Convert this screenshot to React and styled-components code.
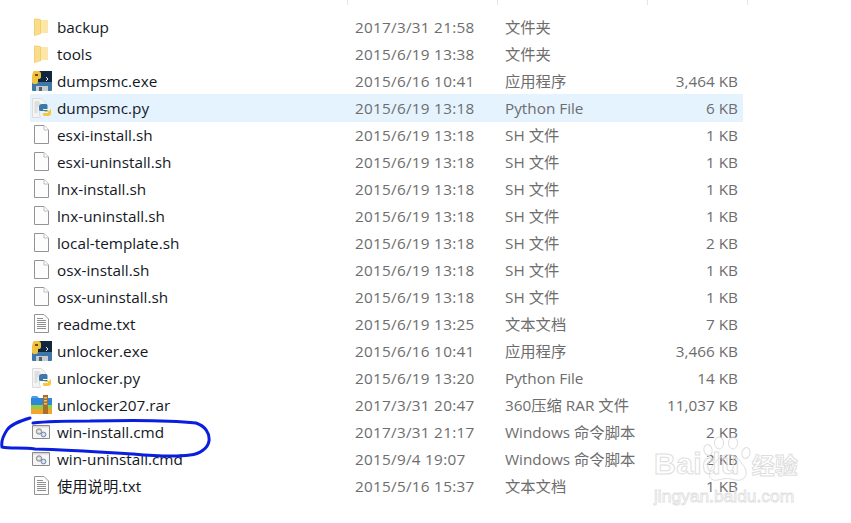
import React from 'react';
import styled, { createGlobalStyle } from 'styled-components';

const Global = createGlobalStyle`
  html, body { margin: 0; padding: 0; background: #fff; }
  body { width: 851px; height: 523px; overflow: hidden; }
`;

const Page = styled.div`
  position: relative;
  width: 851px;
  height: 523px;
  padding-top: 13px;
  box-sizing: border-box;
  font-family: "Open Sans", "Noto Sans CJK SC", sans-serif;
  font-size: 15.3px;
  line-height: 20px;
  overflow: hidden;
`;

const Dividers = styled.div`
  position: absolute;
  top: 0;
  left: 347px;
  width: 401px;
  height: 5px;
  display: grid;
  grid-template-columns: 150px 150px 100px 1px;
`;
const Divider = styled.span`
  width: 1px;
  background: #e5e5e5;
`;

const List = styled.div`
  display: flex;
  flex-direction: column;
  margin-left: 30px;
  width: 713px;
`;

const Row = styled.div`
  display: grid;
  grid-template-columns: 27px 298px 150px 150px 88px;
  align-items: center;
  height: 27px;
  background: ${p => (p.$selected ? '#e5f3ff' : 'transparent')};
  box-shadow: ${p => (p.$selected ? '0 1px 0 #e5f3ff' : 'none')};
`;
const IconCell = styled.div`
  display: flex;
  justify-content: center;
  align-items: center;
  padding-right: 5px;
`;
const Name = styled.div`
  color: #14181f;
  white-space: nowrap;
`;
const Meta = styled.div`
  color: #6d6d6d;
  white-space: nowrap;
`;
const DateText = styled(Meta)`
  letter-spacing: .27px;
`;
const Size = styled(Meta)`
  text-align: right;
  padding-right: 5px;
`;

const Overlay = styled.svg`
  position: absolute;
  left: 0;
  top: 0;
  pointer-events: none;
`;

const Watermark = styled.div`
  position: absolute;
  left: 654px;
  top: 447px;
  width: 160px;
  font-family: "Liberation Sans", "Noto Sans CJK SC", sans-serif;
  pointer-events: none;
`;
const Brand = styled.div`
  display: flex;
  align-items: baseline;
  font-size: 30px;
  font-weight: 700;
  line-height: 34px;
  letter-spacing: .5px;
  color: transparent;
  -webkit-text-stroke: 1px #dedede;
`;
const BrandCn = styled.span`
  font-size: 23px;
  margin-left: 12px;
  letter-spacing: 0;
`;
const Domain = styled.div`
  font-size: 17.4px;
  line-height: 20px;
  margin-top: 3px;
  color: transparent;
  -webkit-text-stroke: .8px #dedede;
`;

const FolderIcon = () => (
  <svg width="14" height="18" viewBox="0 0 14 18">
    <path d="M6 2h8v13H6z" fill="#fce7a8" />
    <path d="M0 .5l6 .5 1 1v14l-7 2z" fill="#f5cf68" />
    <path d="M1 1.500l5 .5v13.500l-5 1.500z" fill="#f9dd8c" />
  </svg>
);
const BlankIcon = () => (
  <svg width="15" height="19" viewBox="0 0 15 19">
    <path d="M.5 .5h9.500l4.500 4.500v13.500H.5z" fill="#fdfdfd" stroke="#949494" />
    <path d="M10 .5v4.500h4.500" fill="#fff" stroke="#bdbdbd" />
  </svg>
);
const TextIcon = () => (
  <svg width="15" height="19" viewBox="0 0 15 19">
    <path d="M.5 .5h9.500l4.500 4.500v13.500H.5z" fill="#fdfdfd" stroke="#949494" />
    <path d="M3 4.500h6M3 6.500h9M3 8.500h9M3 10.500h9M3 12.500h9M3 14.500h9" stroke="#8f8f8f" />
  </svg>
);
const ExeIcon = () => (
  <svg width="21" height="20" viewBox="0 0 21 20">
    <path d="M4 0h17v19H2z" fill="#10273f" />
    <path d="M1 11h20v8a1 1 0 0 1-1 1H2a1 1 0 0 1-1-1z" fill="#3f76a8" />
    <path d="M5 15h12v5H5z" fill="#c5ccd2" />
    <path d="M8 16h3v4H8z" fill="#51606d" />
    <path d="M2 1a3 3 0 0 1 4-1h2a3 3 0 0 1 2 3v3a2 2 0 0 1-2 2H7v3a2 2 0 0 1-2 2H3a2 2 0 0 1-2-2V5z" fill="#f0c240" />
    <path d="M4 3h3v2H4z" fill="#6a5311" />
    <path d="M15 6l2 2-2 2" fill="none" stroke="#e8eef4" />
  </svg>
);
const PyIcon = () => (
  <svg width="19" height="20" viewBox="0 0 19 20">
    <path d="M.5 .5h9l4 4v3h-3l-3 3v6l1 3H.5z" fill="#f4f4f4" stroke="#dcdcdc" />
    <path d="M2.500 4h5M2.500 6h6M2.500 8h5M2.500 10h3M2.500 12h3M2.500 14h3" stroke="#c9c9c9" />
    <path d="M10 6h4a1.500 1.500 0 0 1 1.500 1.500V11H11v1h4.500v1H8.500A1.500 1.500 0 0 1 7 11.500V9a3 3 0 0 1 3-3z" fill="#3c79ab" />
    <path d="M19 11v4a3 3 0 0 1-3 3h-3.500a1.500 1.500 0 0 1-1.500-1.500V15h5v-1h-4l1-1h3.500a2 2 0 0 0 2-2z" fill="#f5c83c" />
  </svg>
);
const RarIcon = () => (
  <svg width="21" height="20" viewBox="0 0 21 20">
    <path d="M0 3h21v7H0z" fill="#2f87d8" />
    <path d="M0 3l1-2h5l2 2z" fill="#4aa0ec" />
    <path d="M0 10h21v4H0z" fill="#8ecf4a" />
    <path d="M0 14h21v5H0z" fill="#f5a52e" />
    <path d="M12 0h5v19h-5z" fill="#a7702a" />
    <path d="M13 2h3v1.500h-3zM13 5h3v1.500h-3zM13 8h3v1.500h-3z" fill="#e3c27a" />
  </svg>
);
const CmdIcon = () => (
  <svg width="18" height="14" viewBox="0 0 18 14">
    <path d="M.5 .5h17v13H.5z" fill="#f6f6f6" stroke="#8a8a8a" />
    <path d="M1 1h16v1.500H1z" fill="#d8d8d8" />
    <circle cx="7" cy="6.500" r="2.700" fill="#d6d6d6" stroke="#8a8a8a" />
    <circle cx="7" cy="6.500" r=".8" fill="#fff" />
    <circle cx="11.500" cy="9.500" r="2.400" fill="#c8d8ee" stroke="#7188ad" />
    <circle cx="11.500" cy="9.500" r=".7" fill="#fff" />
  </svg>
);

const icons = { folder: FolderIcon, blank: BlankIcon, text: TextIcon, exe: ExeIcon, py: PyIcon, rar: RarIcon, cmd: CmdIcon };

const files = [
  ['folder', 'backup', '2017/3/31 21:58', '文件夹', ''],
  ['folder', 'tools', '2015/6/19 13:38', '文件夹', ''],
  ['exe', 'dumpsmc.exe', '2015/6/16 10:41', '应用程序', '3,464 KB'],
  ['py', 'dumpsmc.py', '2015/6/19 13:18', 'Python File', '6 KB', true],
  ['blank', 'esxi-install.sh', '2015/6/19 13:18', 'SH 文件', '1 KB'],
  ['blank', 'esxi-uninstall.sh', '2015/6/19 13:18', 'SH 文件', '1 KB'],
  ['blank', 'lnx-install.sh', '2015/6/19 13:18', 'SH 文件', '1 KB'],
  ['blank', 'lnx-uninstall.sh', '2015/6/19 13:18', 'SH 文件', '1 KB'],
  ['blank', 'local-template.sh', '2015/6/19 13:18', 'SH 文件', '2 KB'],
  ['blank', 'osx-install.sh', '2015/6/19 13:18', 'SH 文件', '1 KB'],
  ['blank', 'osx-uninstall.sh', '2015/6/19 13:18', 'SH 文件', '1 KB'],
  ['text', 'readme.txt', '2015/6/19 13:25', '文本文档', '7 KB'],
  ['exe', 'unlocker.exe', '2015/6/16 10:41', '应用程序', '3,466 KB'],
  ['py', 'unlocker.py', '2015/6/19 13:20', 'Python File', '14 KB'],
  ['rar', 'unlocker207.rar', '2017/3/31 20:47', '360压缩 RAR 文件', '11,037 KB'],
  ['cmd', 'win-install.cmd', '2017/3/31 21:17', 'Windows 命令脚本', '2 KB'],
  ['cmd', 'win-uninstall.cmd', '2015/9/4 19:07', 'Windows 命令脚本', '2 KB'],
  ['text', '使用说明.txt', '2015/5/16 15:37', '文本文档', '1 KB'],
];

export default function App() {
  return (
    <Page>
      <Global />
      <Dividers>
        <Divider /><Divider /><Divider /><Divider />
      </Dividers>
      <List>
        {files.map(([icon, name, date, type, size, selected]) => {
          const Icon = icons[icon];
          return (
            <Row key={name} $selected={selected}>
              <IconCell><Icon /></IconCell>
              <Name>{name}</Name>
              <DateText>{date}</DateText>
              <Meta>{type}</Meta>
              <Size>{size}</Size>
            </Row>
          );
        })}
      </List>
      <Watermark>
        <Brand>Baidu<BrandCn>经验</BrandCn></Brand>
        <Domain>jingyan.baidu.com</Domain>
      </Watermark>
      <Overlay width="851" height="523" viewBox="0 0 851 523">
        <g fill="none" stroke="#dedede" strokeWidth="1">
          <ellipse cx="708" cy="450" rx="4" ry="5.500" transform="rotate(-15 708 450)" />
          <ellipse cx="719" cy="443" rx="4.500" ry="6" />
          <ellipse cx="733" cy="443" rx="4.500" ry="6" />
          <ellipse cx="746" cy="453" rx="4" ry="5.500" transform="rotate(15 746 453)" />
          <path d="M716 462 C722 452 736 452 742 464 C750 472 746 482 735 480 C728 478 726 478 718 480 C708 482 706 472 716 462 Z" />
        </g>
        <path d="M30 418 C20 421 11 424 7 430 C3 436 1 442 2 447 C10 449 22 447 35 449 C70 450 100 452 133 454 C155 456 175 457 190 455 C200 454 208 448 209 441 C210 433 205 426 196 423 C170 420 130 420 90 421 C70 421 50 421 33 423" fill="none" stroke="#0a1ee0" strokeWidth="3" strokeLinecap="round" />
      </Overlay>
    </Page>
  );
}
